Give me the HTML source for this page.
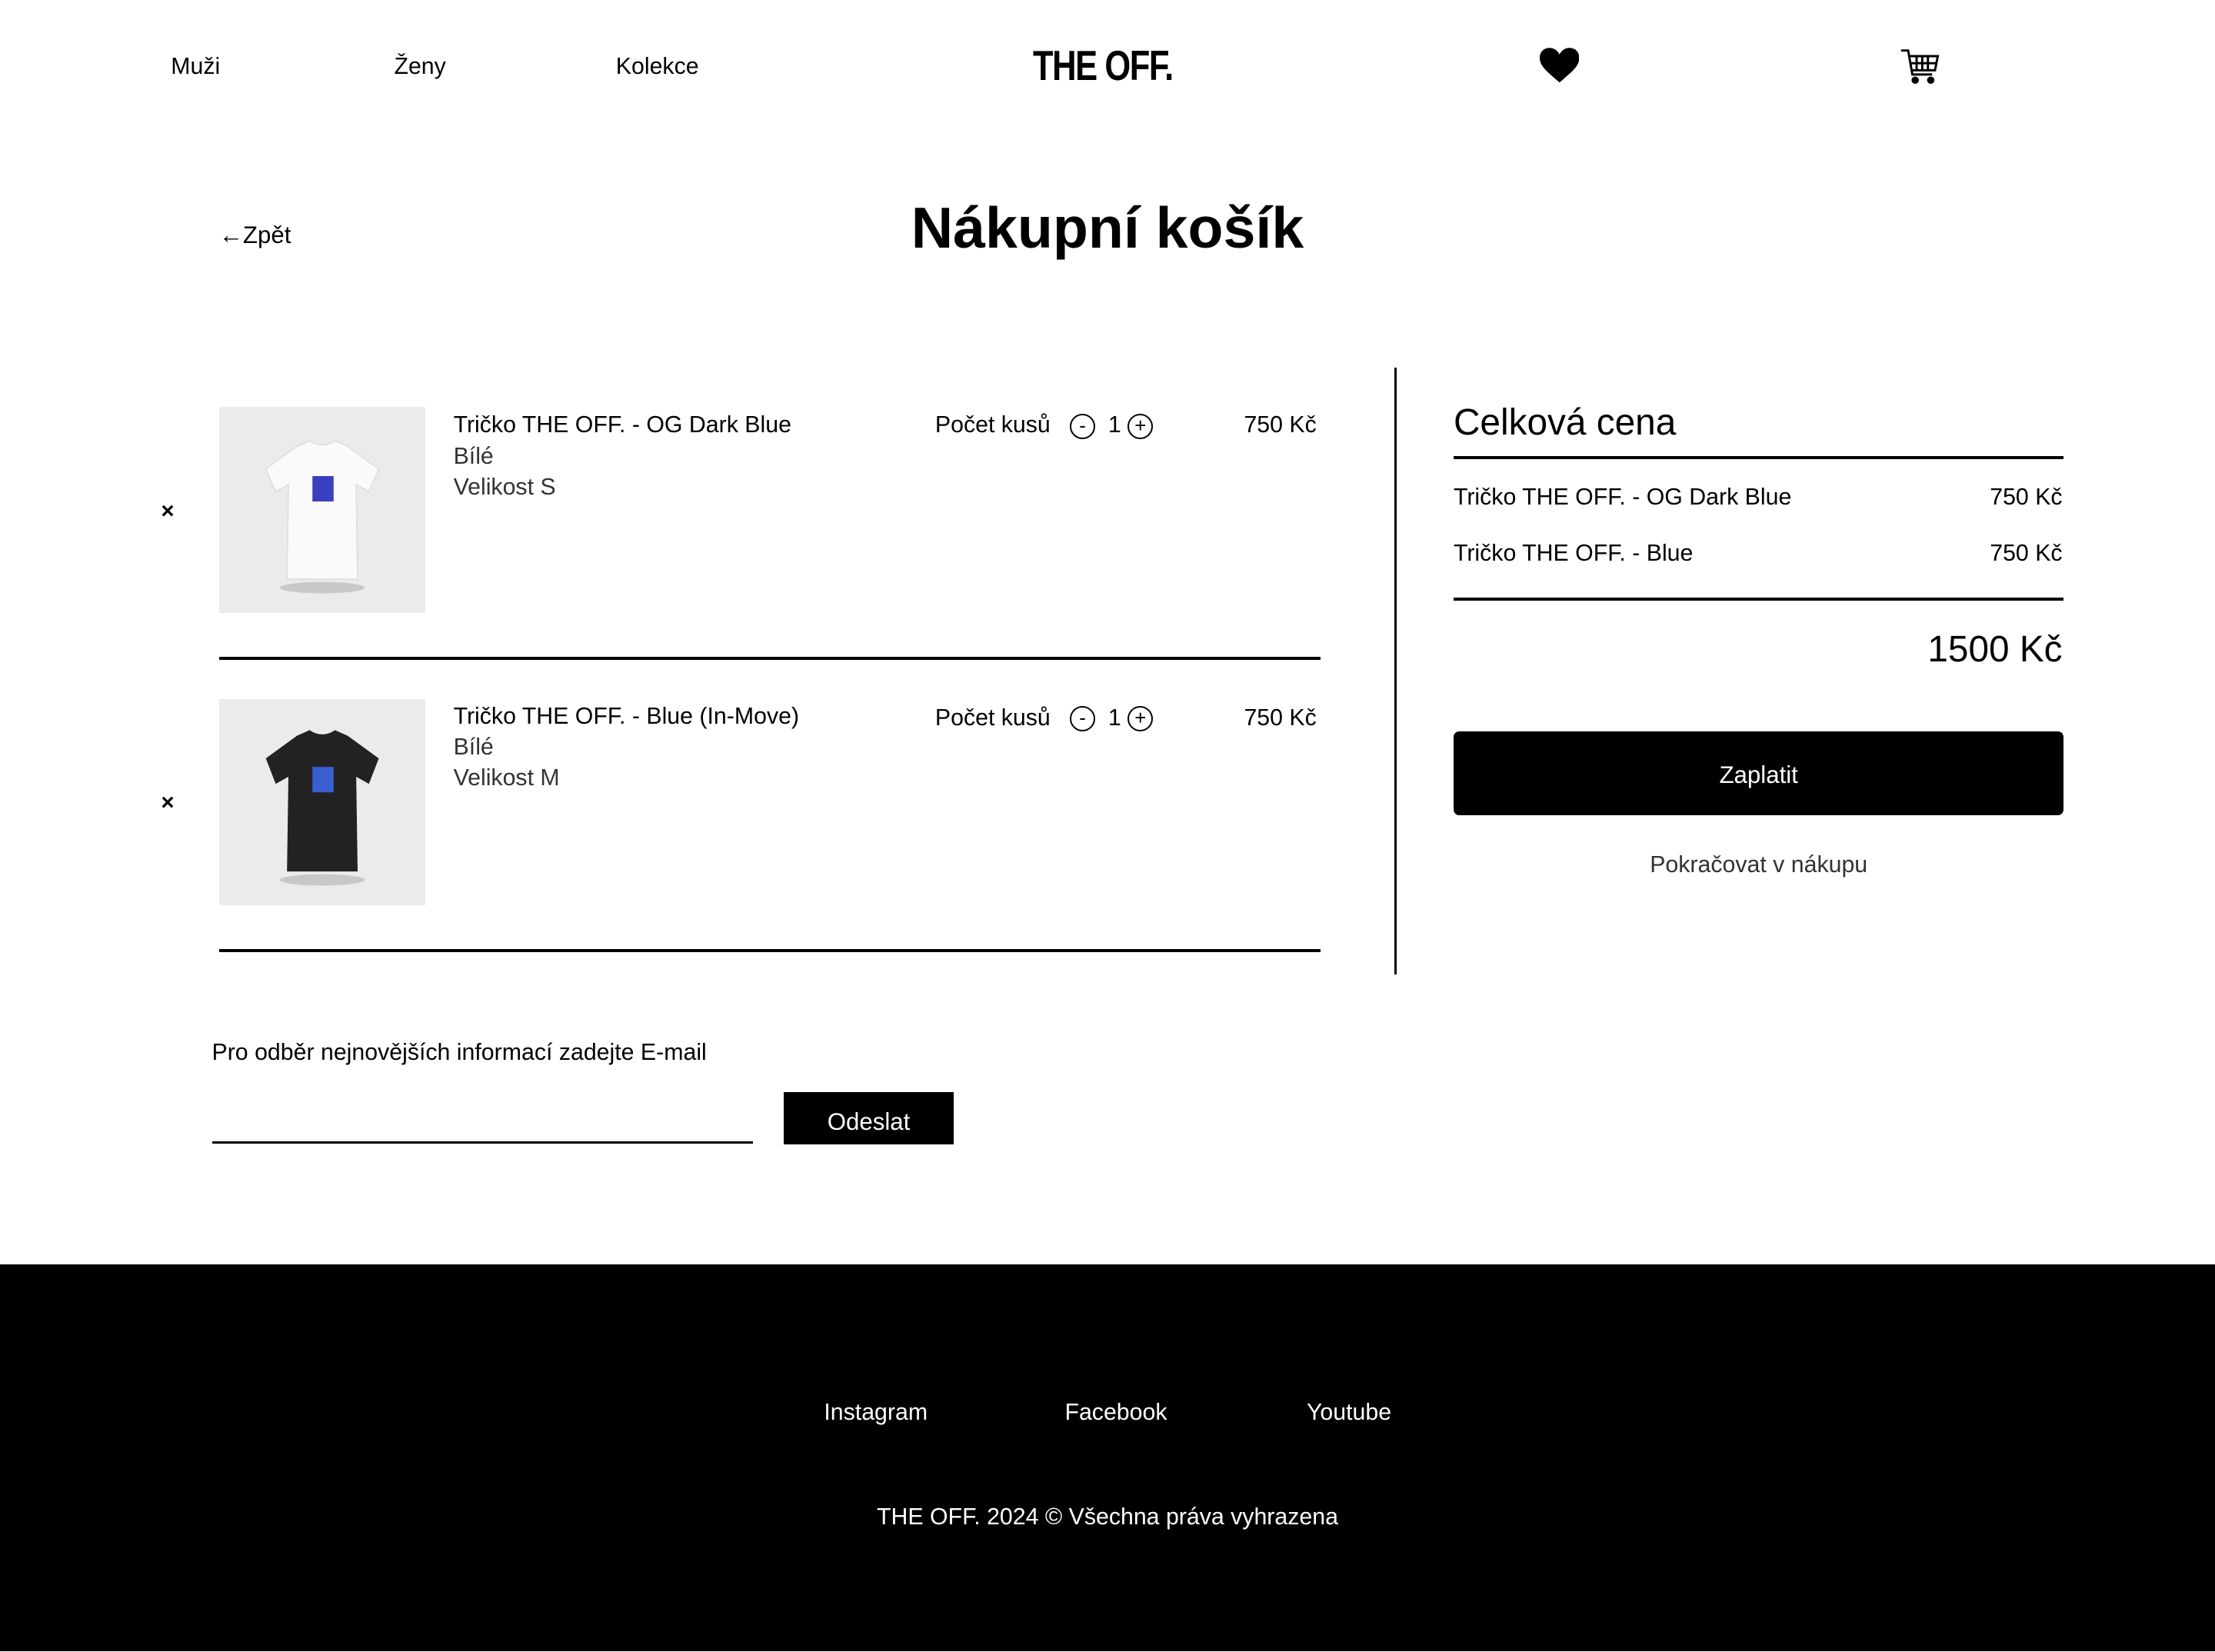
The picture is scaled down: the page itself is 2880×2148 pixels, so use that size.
<!DOCTYPE html>
<html><head><meta charset="utf-8">
<style>
html,body{margin:0;padding:0;background:#fff}
body{width:1568px;height:1169px;zoom:1.8367;position:relative;overflow:hidden;font-family:"Liberation Sans",sans-serif;color:#000}
.a{position:absolute;white-space:nowrap}
.t{font-size:16.5px}
.g{color:#333;font-weight:300}
.hl{position:absolute;height:2px;background:#000}
.img{position:absolute;width:146px;height:146px;background:#ebebeb}
.c{display:inline-block;width:18px;height:18px;border:1.3px solid #000;border-radius:50%;text-align:center;line-height:16px;font-size:14px;vertical-align:middle;box-sizing:border-box}
.r{text-align:right}
</style></head><body>
<div class="a t" style="left:121px;top:38px">Muži</div>
<div class="a t" style="left:279px;top:38px">Ženy</div>
<div class="a t" style="left:436px;top:38px">Kolekce</div>
<div class="a" style="left:731px;top:30px;font-weight:bold;font-size:30px;line-height:33px;letter-spacing:-1px;transform-origin:0 0;transform:scaleX(0.79)">THE OFF.</div>
<svg class="a" style="left:1090px;top:34px" width="28" height="26" viewBox="0 0 24 22"><path d="M12 21 C4 14 0 11 0 6 C0 2 3 0 6 0 C9 0 11 2 12 4 C13 2 15 0 18 0 C21 0 24 2 24 6 C24 11 20 14 12 21Z" fill="#000"/></svg>
<svg class="a" style="left:1345px;top:34px" width="28" height="27" viewBox="0 0 28 27" fill="none" stroke="#000" stroke-width="1.6"><path d="M1 2h5l3 17h14"/><path d="M7 6h20l-2 10H9"/><path d="M12 6v10M16 6v10M20 6v10M8 11h18"/><circle cx="11" cy="23" r="1.8" fill="#000"/><circle cx="22" cy="23" r="1.8" fill="#000"/></svg>

<div class="a" style="left:155px;top:157px;font-size:17px">←Zpět</div>
<div class="a" style="left:0;width:1568px;text-align:center;top:138px;font-size:41px;font-weight:bold">Nákupní košík</div>

<div class="a" style="left:114px;top:353px;font-size:16px;font-weight:bold">×</div>
<div class="img" style="left:155px;top:288px">
<svg width="146" height="146" viewBox="0 0 146 146"><ellipse cx="73" cy="128" rx="30" ry="4" fill="#c8c8c8"/><path d="M55 28 L64 24 Q73 30 82 24 L91 28 L113 44 L106 60 L97 55 L98 122 L48 122 L49 55 L40 60 L33 44Z" fill="#fafafa" stroke="#e0e0e0"/><rect x="66" y="49" width="15" height="18" fill="#3a3fc0"/></svg></div>
<div class="a t" style="left:321px;top:292px">Tričko THE OFF. - OG Dark Blue</div>
<div class="a t g" style="left:321px;top:314px">Bílé</div>
<div class="a t g" style="left:321px;top:336px">Velikost S</div>
<div class="a t" style="left:662px;top:292px">Počet kusů &nbsp;&nbsp;<span class="c">-</span>&nbsp; 1 <span class="c">+</span></div>
<div class="a t r" style="left:832px;width:100px;top:292px">750 Kč</div>
<div class="hl" style="left:155px;width:780px;top:465px"></div>

<div class="a" style="left:114px;top:559px;font-size:16px;font-weight:bold">×</div>
<div class="img" style="left:155px;top:495px">
<svg width="146" height="146" viewBox="0 0 146 146"><ellipse cx="73" cy="128" rx="30" ry="4" fill="#c8c8c8"/><path d="M55 26 L64 22 Q73 28 82 22 L91 26 L113 42 L106 60 L97 55 L98 122 L48 122 L49 55 L40 60 L33 42Z" fill="#222"/><rect x="66" y="48" width="15" height="18" fill="#3a5ed0"/></svg></div>
<div class="a t" style="left:321px;top:498px">Tričko THE OFF. - Blue (In-Move)</div>
<div class="a t g" style="left:321px;top:520px">Bílé</div>
<div class="a t g" style="left:321px;top:542px">Velikost M</div>
<div class="a t" style="left:662px;top:499px">Počet kusů &nbsp;&nbsp;<span class="c">-</span>&nbsp; 1 <span class="c">+</span></div>
<div class="a t r" style="left:832px;width:100px;top:499px">750 Kč</div>
<div class="hl" style="left:155px;width:780px;top:672px"></div>

<div class="a" style="left:987px;top:260px;width:2px;height:430px;background:#000"></div>

<div class="a" style="left:1029px;top:284px;font-size:26px">Celková cena</div>
<div class="hl" style="left:1029px;width:432px;top:323px"></div>
<div class="a t" style="left:1029px;top:343px">Tričko THE OFF. - OG Dark Blue</div>
<div class="a t r" style="left:1360px;width:100px;top:343px">750 Kč</div>
<div class="a t" style="left:1029px;top:383px">Tričko THE OFF. - Blue</div>
<div class="a t r" style="left:1360px;width:100px;top:383px">750 Kč</div>
<div class="hl" style="left:1029px;width:432px;top:423px"></div>
<div class="a r" style="left:1260px;width:200px;top:445px;font-size:26px">1500 Kč</div>
<div class="a" style="left:1029px;top:518px;width:432px;height:59px;background:#000;border-radius:4px;color:#fff;text-align:center;line-height:62px;font-size:17px">Zaplatit</div>
<div class="a t" style="left:1029px;width:432px;text-align:center;top:603px;color:#333">Pokračovat v nákupu</div>

<div class="a t" style="left:150px;top:736px">Pro odběr nejnovějších informací zadejte E-mail</div>
<div class="hl" style="left:150px;width:383px;top:808px;height:1.5px"></div>
<div class="a" style="left:555px;top:773px;width:120px;height:37px;background:#000;color:#fff;text-align:center;line-height:42px;font-size:17px">Odeslat</div>

<div class="a" style="left:0;top:895px;width:1568px;height:274px;background:#000"></div>
<div class="a t" style="left:520px;width:200px;text-align:center;top:991px;color:#fff">Instagram</div>
<div class="a t" style="left:690px;width:200px;text-align:center;top:991px;color:#fff">Facebook</div>
<div class="a t" style="left:855px;width:200px;text-align:center;top:991px;color:#fff">Youtube</div>
<div class="a t" style="left:0;width:1568px;text-align:center;top:1065px;color:#fff">THE OFF. 2024 © Všechna práva vyhrazena</div>
</body></html>
